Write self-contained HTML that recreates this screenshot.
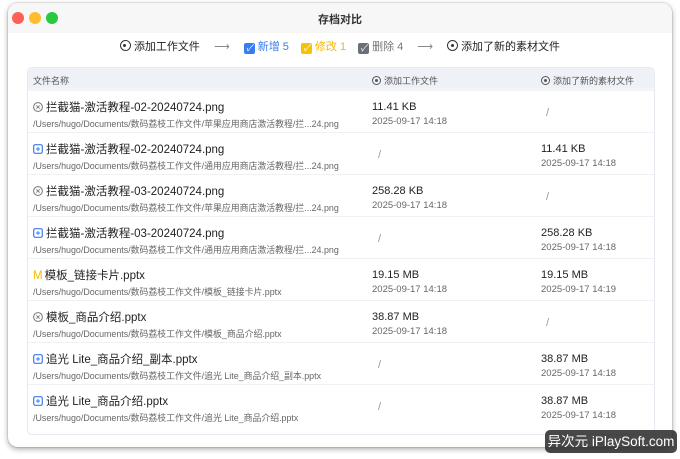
<!DOCTYPE html>
<html><head><meta charset="utf-8"><style>
*{margin:0;padding:0;box-sizing:border-box}
body{width:680px;height:459px;background:#fff;font-family:"Liberation Sans","Noto Sans CJK SC",sans-serif;position:relative;overflow:hidden}
.win{position:absolute;left:8px;top:3px;width:664px;height:444px;background:#fff;border-radius:10px;box-shadow:0 2px 6px rgba(0,0,0,.35),0 0 0 1px rgba(0,0,0,.08)}
.tb{height:30px;background:#f7f7f8;border-radius:10px 10px 0 0;position:relative}
.dot{position:absolute;top:9px;width:12px;height:12px;border-radius:50%}
.title{position:absolute;left:0;right:0;top:8px;text-align:center;font-size:11px;color:#333;font-weight:bold}
.steps{position:absolute;top:35px;left:0;right:0;display:flex;justify-content:center;align-items:center;font-size:11px;color:#222;gap:6px}
.ci{display:inline-block;width:11px;height:11px;border:1.3px solid #333;border-radius:50%;position:relative;vertical-align:-1px;margin-right:3px}
.ci:after{content:"";position:absolute;left:2.5px;top:2.5px;width:3px;height:3px;border-radius:50%;background:#333}
.cb{display:inline-block;width:11px;height:11px;border-radius:2px;color:#fff;font-size:9px;line-height:11px;text-align:center;margin-right:3px;vertical-align:-1px}
.arr{color:#888;margin:0 8px}
.table{position:absolute;left:19px;top:64px;width:628px;height:368px;border:1px solid #e6e9ef;border-radius:5px;overflow:hidden}
.hd{height:23px;background:#eef1f6;font-size:9px;color:#555;position:relative;border-bottom:3px solid #f3f5f8}
.hd span{position:absolute;top:6px}
.ci2{display:inline-block;width:9px;height:9px;border:1px solid #555;border-radius:50%;position:relative;vertical-align:-1px;margin-right:3px}
.ci2:after{content:"";position:absolute;left:2px;top:2px;width:3px;height:3px;border-radius:50%;background:#555}
.row{height:42px;border-bottom:1.5px solid #eef1f5;position:relative}
.n{position:absolute;left:5px;top:8px;font-size:11.5px;color:#222;white-space:nowrap}
.p{position:absolute;left:5px;top:26px;font-size:8.9px;color:#666;white-space:nowrap}
.s{position:absolute;top:10px;font-size:11px;color:#222}
.d{position:absolute;top:25px;font-size:9.5px;color:#666}
.sl{position:absolute;top:16px;font-size:11px;color:#999}
svg{vertical-align:-1px;margin-right:3px}
.im{color:#f5b800;margin-right:2px}
.wm{position:absolute;left:545px;top:430px;width:132px;height:23px;background:rgba(40,40,40,.85);border-radius:5px;color:#fff;font-size:13.5px;line-height:23px;text-align:center;white-space:nowrap;overflow:hidden}
</style></head><body>
<svg width="0" height="0" style="position:absolute"><defs>
<symbol id="x" viewBox="0 0 10 10"><circle cx="5" cy="5" r="4.4" fill="none" stroke="#777" stroke-width="1"/><path d="M3.4 3.4L6.6 6.6M6.6 3.4L3.4 6.6" stroke="#777" stroke-width="0.9"/></symbol>
<symbol id="pl" viewBox="0 0 10 10"><rect x="0.7" y="0.7" width="8.6" height="8.6" rx="1.5" fill="none" stroke="#3b7bf0" stroke-width="1.2"/><path d="M5 3V7M3 5H7" stroke="#3b7bf0" stroke-width="1"/></symbol>
</defs></svg>
<div class="win">
<div class="tb"><div class="dot" style="left:4px;background:#fe5f57"></div><div class="dot" style="left:21px;background:#febc2e"></div><div class="dot" style="left:38px;background:#28c840"></div><div class="title">存档对比</div></div>
<div class="steps"><span><i class="ci"></i>添加工作文件</span><span class="arr">⟶</span><span style="color:#3b7bf0"><i class="cb" style="background:#3b7bf0">✓</i>新增 5</span><span style="color:#f5b800;margin-left:6px"><i class="cb" style="background:#f5c400">✓</i>修改 1</span><span style="color:#777;margin-left:6px"><i class="cb" style="background:#6b6f78">✓</i>删除 4</span><span class="arr">⟶</span><span><i class="ci"></i>添加了新的素材文件</span></div>
<div class="table">
<div class="hd"><span style="left:5px">文件名称</span><span style="left:344px"><i class="ci2"></i>添加工作文件</span><span style="left:513px"><i class="ci2"></i>添加了新的素材文件</span></div>
<div class="row"><div class="n"><svg width="10" height="10"><use href="#x"/></svg>拦截猫-激活教程-02-20240724.png</div><div class="p">/Users/hugo/Documents/数码荔枝工作文件/苹果应用商店激活教程/拦...24.png</div><div class="s" style="left:344px">11.41 KB</div><div class="d" style="left:344px">2025-09-17 14:18</div><div class="sl" style="left:518px">/</div></div>
<div class="row"><div class="n"><svg width="10" height="10"><use href="#pl"/></svg>拦截猫-激活教程-02-20240724.png</div><div class="p">/Users/hugo/Documents/数码荔枝工作文件/通用应用商店激活教程/拦...24.png</div><div class="sl" style="left:350px">/</div><div class="s" style="left:513px">11.41 KB</div><div class="d" style="left:513px">2025-09-17 14:18</div></div>
<div class="row"><div class="n"><svg width="10" height="10"><use href="#x"/></svg>拦截猫-激活教程-03-20240724.png</div><div class="p">/Users/hugo/Documents/数码荔枝工作文件/苹果应用商店激活教程/拦...24.png</div><div class="s" style="left:344px">258.28 KB</div><div class="d" style="left:344px">2025-09-17 14:18</div><div class="sl" style="left:518px">/</div></div>
<div class="row"><div class="n"><svg width="10" height="10"><use href="#pl"/></svg>拦截猫-激活教程-03-20240724.png</div><div class="p">/Users/hugo/Documents/数码荔枝工作文件/通用应用商店激活教程/拦...24.png</div><div class="sl" style="left:350px">/</div><div class="s" style="left:513px">258.28 KB</div><div class="d" style="left:513px">2025-09-17 14:18</div></div>
<div class="row"><div class="n"><span class="im">M</span>模板_链接卡片.pptx</div><div class="p">/Users/hugo/Documents/数码荔枝工作文件/模板_链接卡片.pptx</div><div class="s" style="left:344px">19.15 MB</div><div class="d" style="left:344px">2025-09-17 14:18</div><div class="s" style="left:513px">19.15 MB</div><div class="d" style="left:513px">2025-09-17 14:19</div></div>
<div class="row"><div class="n"><svg width="10" height="10"><use href="#x"/></svg>模板_商品介绍.pptx</div><div class="p">/Users/hugo/Documents/数码荔枝工作文件/模板_商品介绍.pptx</div><div class="s" style="left:344px">38.87 MB</div><div class="d" style="left:344px">2025-09-17 14:18</div><div class="sl" style="left:518px">/</div></div>
<div class="row"><div class="n"><svg width="10" height="10"><use href="#pl"/></svg>追光 Lite_商品介绍_副本.pptx</div><div class="p">/Users/hugo/Documents/数码荔枝工作文件/追光 Lite_商品介绍_副本.pptx</div><div class="sl" style="left:350px">/</div><div class="s" style="left:513px">38.87 MB</div><div class="d" style="left:513px">2025-09-17 14:18</div></div>
<div class="row" style="border:0"><div class="n"><svg width="10" height="10"><use href="#pl"/></svg>追光 Lite_商品介绍.pptx</div><div class="p">/Users/hugo/Documents/数码荔枝工作文件/追光 Lite_商品介绍.pptx</div><div class="sl" style="left:350px">/</div><div class="s" style="left:513px">38.87 MB</div><div class="d" style="left:513px">2025-09-17 14:18</div></div>
</div>
</div>
<div class="wm">异次元 iPlaySoft.com</div>
</body></html>
